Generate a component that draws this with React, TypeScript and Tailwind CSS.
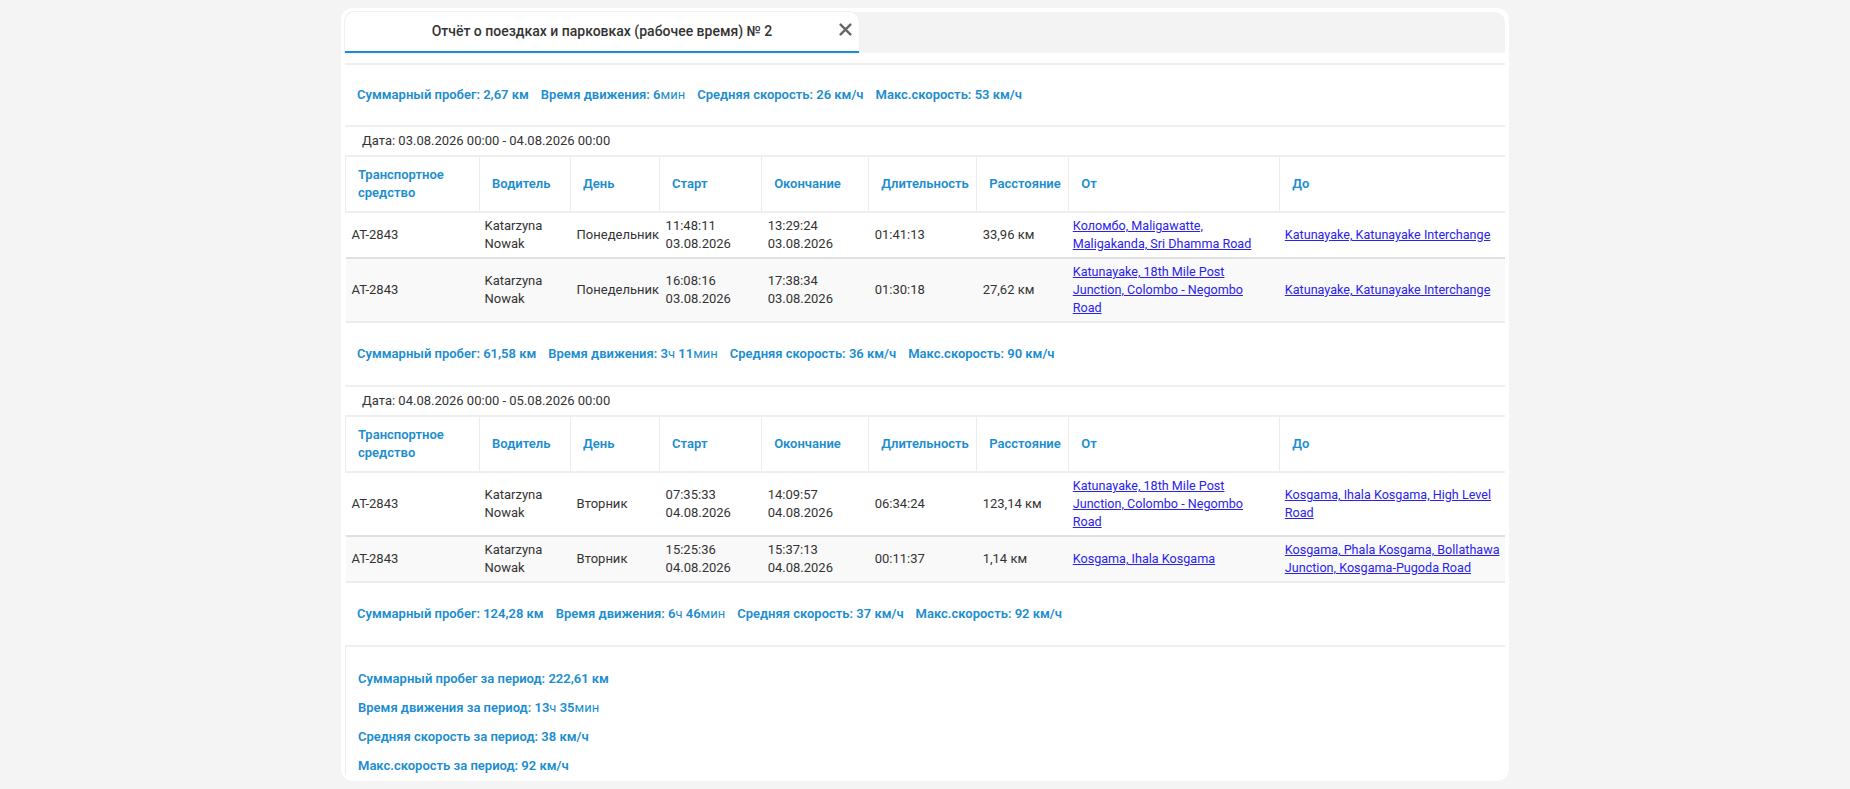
import React from "react";

type Trip = {
  vehicle: string;
  driver: string;
  day: string;
  start: [string, string];
  end: [string, string];
  duration: string;
  distance: string;
  from: string;
  to: string;
};

type Group = {
  date: string;
  trips: Trip[];
  summary: { mileage: string; time: React.ReactNode; avg: string; max: string };
};

const COLS = [134, 91, 89, 102, 107, 108, 92, 211, 225];
const HEADERS = [
  "Транспортное средство",
  "Водитель",
  "День",
  "Старт",
  "Окончание",
  "Длительность",
  "Расстояние",
  "От",
  "До",
];

const GROUPS: Group[] = [
  {
    date: "Дата: 03.08.2026 00:00 - 04.08.2026 00:00",
    trips: [
      {
        vehicle: "AT-2843",
        driver: "Katarzyna Nowak",
        day: "Понедельник",
        start: ["11:48:11", "03.08.2026"],
        end: ["13:29:24", "03.08.2026"],
        duration: "01:41:13",
        distance: "33,96 км",
        from: "Коломбо, Maligawatte, Maligakanda, Sri Dhamma Road",
        to: "Katunayake, Katunayake Interchange",
      },
      {
        vehicle: "AT-2843",
        driver: "Katarzyna Nowak",
        day: "Понедельник",
        start: ["16:08:16", "03.08.2026"],
        end: ["17:38:34", "03.08.2026"],
        duration: "01:30:18",
        distance: "27,62 км",
        from: "Katunayake, 18th Mile Post Junction, Colombo - Negombo Road",
        to: "Katunayake, Katunayake Interchange",
      },
    ],
    summary: {
      mileage: "61,58 км",
      time: (
        <>
          3<span className="font-normal">ч</span> 11<span className="font-normal">мин</span>
        </>
      ),
      avg: "36 км/ч",
      max: "90 км/ч",
    },
  },
  {
    date: "Дата: 04.08.2026 00:00 - 05.08.2026 00:00",
    trips: [
      {
        vehicle: "AT-2843",
        driver: "Katarzyna Nowak",
        day: "Вторник",
        start: ["07:35:33", "04.08.2026"],
        end: ["14:09:57", "04.08.2026"],
        duration: "06:34:24",
        distance: "123,14 км",
        from: "Katunayake, 18th Mile Post Junction, Colombo - Negombo Road",
        to: "Kosgama, Ihala Kosgama, High Level Road",
      },
      {
        vehicle: "AT-2843",
        driver: "Katarzyna Nowak",
        day: "Вторник",
        start: ["15:25:36", "04.08.2026"],
        end: ["15:37:13", "04.08.2026"],
        duration: "00:11:37",
        distance: "1,14 км",
        from: "Kosgama, Ihala Kosgama",
        to: "Kosgama, Phala Kosgama, Bollathawa Junction, Kosgama-Pugoda Road",
      },
    ],
    summary: {
      mileage: "124,28 км",
      time: (
        <>
          6<span className="font-normal">ч</span> 46<span className="font-normal">мин</span>
        </>
      ),
      avg: "37 км/ч",
      max: "92 км/ч",
    },
  },
];

function Summary({ s }: { s: Group["summary"] }) {
  return (
    <div className="flex items-center gap-3 border-b-2 border-[#efefef] px-3 py-[22px] text-[13px] leading-[18px] font-semibold text-[#1b8dd0]">
      <span>Суммарный пробег: {s.mileage}</span>
      <span>Время движения: {s.time}</span>
      <span>Средняя скорость: {s.avg}</span>
      <span>Макс.скорость: {s.max}</span>
    </div>
  );
}

function TripTable({ trips }: { trips: Trip[] }) {
  return (
    <table className="w-full table-fixed border-collapse text-[13px] leading-[18px]">
      <colgroup>
        {COLS.map((w, i) => (
          <col key={i} style={{ width: w }} />
        ))}
      </colgroup>
      <thead>
        <tr className="border-b-2 border-[#efefef]">
          {HEADERS.map((h, i) => (
            <th
              key={h}
              className={`px-3 py-[9px] text-left align-middle font-semibold text-[#1b8dd0] ${
                i === 0 ? "border-l border-[#ececec]" : ""
              } ${i < HEADERS.length - 1 ? "border-r border-[#ececec]" : ""}`}
            >
              {h}
            </th>
          ))}
        </tr>
      </thead>
      <tbody className="text-[#333]">
        {trips.map((t, i) => (
          <tr
            key={i}
            className={i % 2 === 1 ? "border-b-2 border-[#ececec] bg-[#f9f9f9]" : "border-b-2 border-[#e0e0e0] bg-white"}
          >
            <td className="px-[6px] py-[4px] align-middle">{t.vehicle}</td>
            <td className="px-[5px] py-[4px] align-middle">{t.driver}</td>
            <td className="px-[6px] py-[4px] align-middle whitespace-nowrap">{t.day}</td>
            <td className="px-[6px] py-[4px] align-middle">
              {t.start[0]}
              <br />
              {t.start[1]}
            </td>
            <td className="px-[6px] py-[4px] align-middle">
              {t.end[0]}
              <br />
              {t.end[1]}
            </td>
            <td className="px-[6px] py-[4px] align-middle">{t.duration}</td>
            <td className="px-[6px] py-[4px] align-middle">{t.distance}</td>
            <td className="pl-[4px] pr-[14px] py-[4px] align-middle text-[12.6px]">
              <a href="#" className="text-[#2a22ec] underline">
                {t.from}
              </a>
            </td>
            <td className="pl-[5px] pr-0 py-[4px] align-middle text-[12.6px]">
              <a href="#" className="text-[#2a22ec] underline">
                {t.to}
              </a>
            </td>
          </tr>
        ))}
      </tbody>
    </table>
  );
}

export default function App() {
  return (
    <div
      className="min-h-screen bg-[#f4f4f4] pt-2"
      style={{ fontFamily: "Roboto, 'Noto Sans', sans-serif" }}
    >
      <div className="mx-auto flex h-[773px] w-[1168px] flex-col rounded-xl bg-white p-1">
        {/* tabs */}
        <div className="flex h-[41px] shrink-0 rounded-t-[10px] bg-[#f3f3f3]">
          <div className="relative flex w-[514px] items-center justify-center rounded-t-[10px] border-b-2 border-[#1b8dd6] bg-white shadow-[0_0_0_1px_#f0f0f0]">
            <span className="text-[14px] font-medium text-[#333]">
              Отчёт о поездках и парковках (рабочее время) № 2
            </span>
            <button type="button" className="absolute right-[7px] top-[11px] text-[#666]">
              <svg width="13" height="13" viewBox="0 0 12 12" fill="none">
                <path d="M1.5 1.5l9 9M10.5 1.5l-9 9" stroke="currentColor" strokeWidth="2.2" strokeLinecap="round" />
              </svg>
            </button>
          </div>
          <div className="flex-1" />
        </div>

        {/* scrolled report body */}
        <div className="flex-1 overflow-hidden">
          <div className="h-[10px]" />
          <div className="border-t-2 border-[#efefef]">
            <div className="flex items-center gap-3 border-b-2 border-[#efefef] px-3 py-[21px] text-[13px] leading-[18px] font-semibold text-[#1b8dd0]">
              <span>Суммарный пробег: 2,67 км</span>
              <span>
                Время движения: 6<span className="font-normal">мин</span>
              </span>
              <span>Средняя скорость: 26 км/ч</span>
              <span>Макс.скорость: 53 км/ч</span>
            </div>
          </div>

          {GROUPS.map((g) => (
            <div key={g.date}>
              <div className="border-b-2 border-[#efefef] py-[5px] pl-[17px] text-[13px] leading-[18px] text-[#333]">
                {g.date}
              </div>
              <TripTable trips={g.trips} />
              <Summary s={g.summary} />
            </div>
          ))}

          <div className="flex flex-col gap-[11px] border-l border-[#ececec] px-3 pt-[23px] text-[13px] leading-[18px] font-semibold text-[#1b8dd0]">
            <div>Суммарный пробег за период: 222,61 км</div>
            <div>
              Время движения за период: 13<span className="font-normal">ч</span> 35
              <span className="font-normal">мин</span>
            </div>
            <div>Средняя скорость за период: 38 км/ч</div>
            <div>Макс.скорость за период: 92 км/ч</div>
          </div>
        </div>
      </div>
    </div>
  );
}
